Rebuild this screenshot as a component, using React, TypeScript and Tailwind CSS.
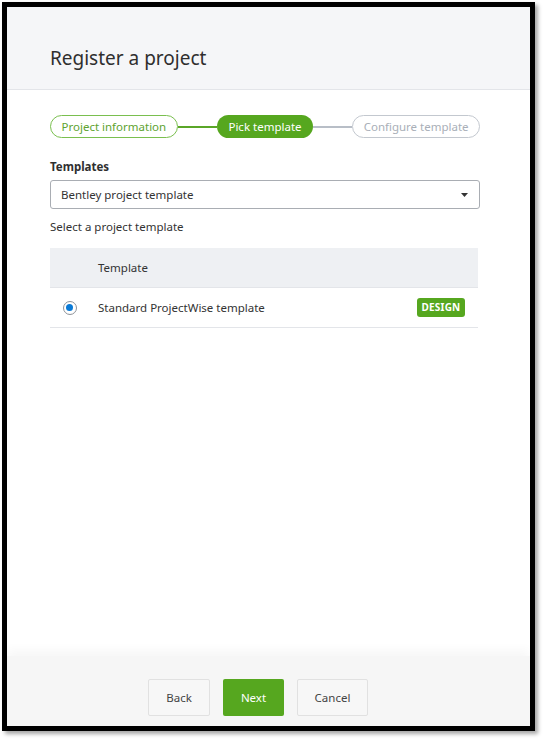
import React from "react";

export default function App() {
  const font = { fontFamily: '"Noto Sans", "Open Sans", sans-serif' };
  return (
    <div className="w-[544px] h-[740px] bg-white pl-[2px] pt-[2px]" style={font}>
      <div className="w-[533px] h-[729px] border-[5px] border-black shadow-[3px_3px_4px_rgba(0,0,0,0.35)] flex flex-col bg-white">
        <div className="h-[83px] shrink-0 bg-[#f5f6f8] border-b border-[#e3e5e9] pl-[43px] pt-[38px]">
          <h1 className="text-[19px] leading-[26px] text-[#2f2f2f]">Register a project</h1>
        </div>
        <div className="flex-1 pl-[43px] pr-[50px] pt-[25px]">
          <div className="flex items-center">
            <div className="h-[23px] w-[128px] rounded-full border-[1.5px] border-[#7abf4f] text-[#5ea330] text-[11.5px] flex items-center justify-center">
              Project information
            </div>
            <div className="w-[39px] h-[2px] bg-[#5aa628]" />
            <div className="h-[23px] w-[97px] rounded-full bg-[#56a71f] text-white text-[11.5px] flex items-center justify-center">
              Pick template
            </div>
            <div className="w-[39px] h-[2px] bg-[#b8bec7]" />
            <div className="h-[23px] w-[128px] rounded-full border-[1.5px] border-[#c3c8cf] text-[#a9afb8] text-[11.5px] flex items-center justify-center">
              Configure template
            </div>
          </div>
          <div className="mt-[21px] text-[11.5px] font-bold text-[#2f2f2f] leading-[16px]">Templates</div>
          <div className="mt-[5px] h-[29px] w-[430px] border border-[#a9adb3] rounded-[3px] flex items-center justify-between pl-[10px] pr-[11px] bg-white">
            <span className="text-[11.5px] text-[#333]">Bentley project template</span>
            <svg width="7" height="4" viewBox="0 0 7 4"><path d="M0 0 L7 0 L3.5 4 Z" fill="#333" /></svg>
          </div>
          <div className="mt-[10px] text-[11.5px] text-[#333] leading-[16px]">Select a project template</div>
          <div className="mt-[13px] w-[428px]">
            <div className="h-[40px] bg-[#eef0f3] flex items-center border-b border-[#e3e5e9]">
              <span className="pl-[48px] text-[11.5px] text-[#333]">Template</span>
            </div>
            <div className="h-[40px] flex items-center border-b border-[#e3e5e9]">
              <div className="w-[48px] flex justify-center pr-[9px]">
                <div className="w-[14px] h-[14px] rounded-full border border-[#8d9299] flex items-center justify-center bg-white">
                  <div className="w-[7px] h-[7px] rounded-full bg-[#0a7ad6]" />
                </div>
              </div>
              <span className="text-[11.5px] text-[#333] flex-1">Standard ProjectWise template</span>
              <span className="mr-[13px] h-[19px] w-[48px] justify-center rounded-[3px] bg-[#56a71f] text-white text-[10px] font-bold tracking-[0.2px] flex items-center">DESIGN</span>
            </div>
          </div>
        </div>
        <div className="h-[70px] shrink-0 bg-[#f6f6f6] shadow-[0_-6px_10px_rgba(0,0,0,0.035)] pl-[141px] pt-[23px] flex items-start gap-[13px]">
          <button className="h-[37px] w-[62px] rounded-[2px] border border-[#e1e1e1] bg-[#f7f7f7] text-[11.5px] text-[#444]">Back</button>
          <button className="h-[37px] w-[61px] rounded-[2px] bg-[#56a71f] text-[11.5px] text-white">Next</button>
          <button className="h-[37px] w-[71px] rounded-[2px] border border-[#e1e1e1] bg-[#f7f7f7] text-[11.5px] text-[#444]">Cancel</button>
        </div>
      </div>
    </div>
  );
}
